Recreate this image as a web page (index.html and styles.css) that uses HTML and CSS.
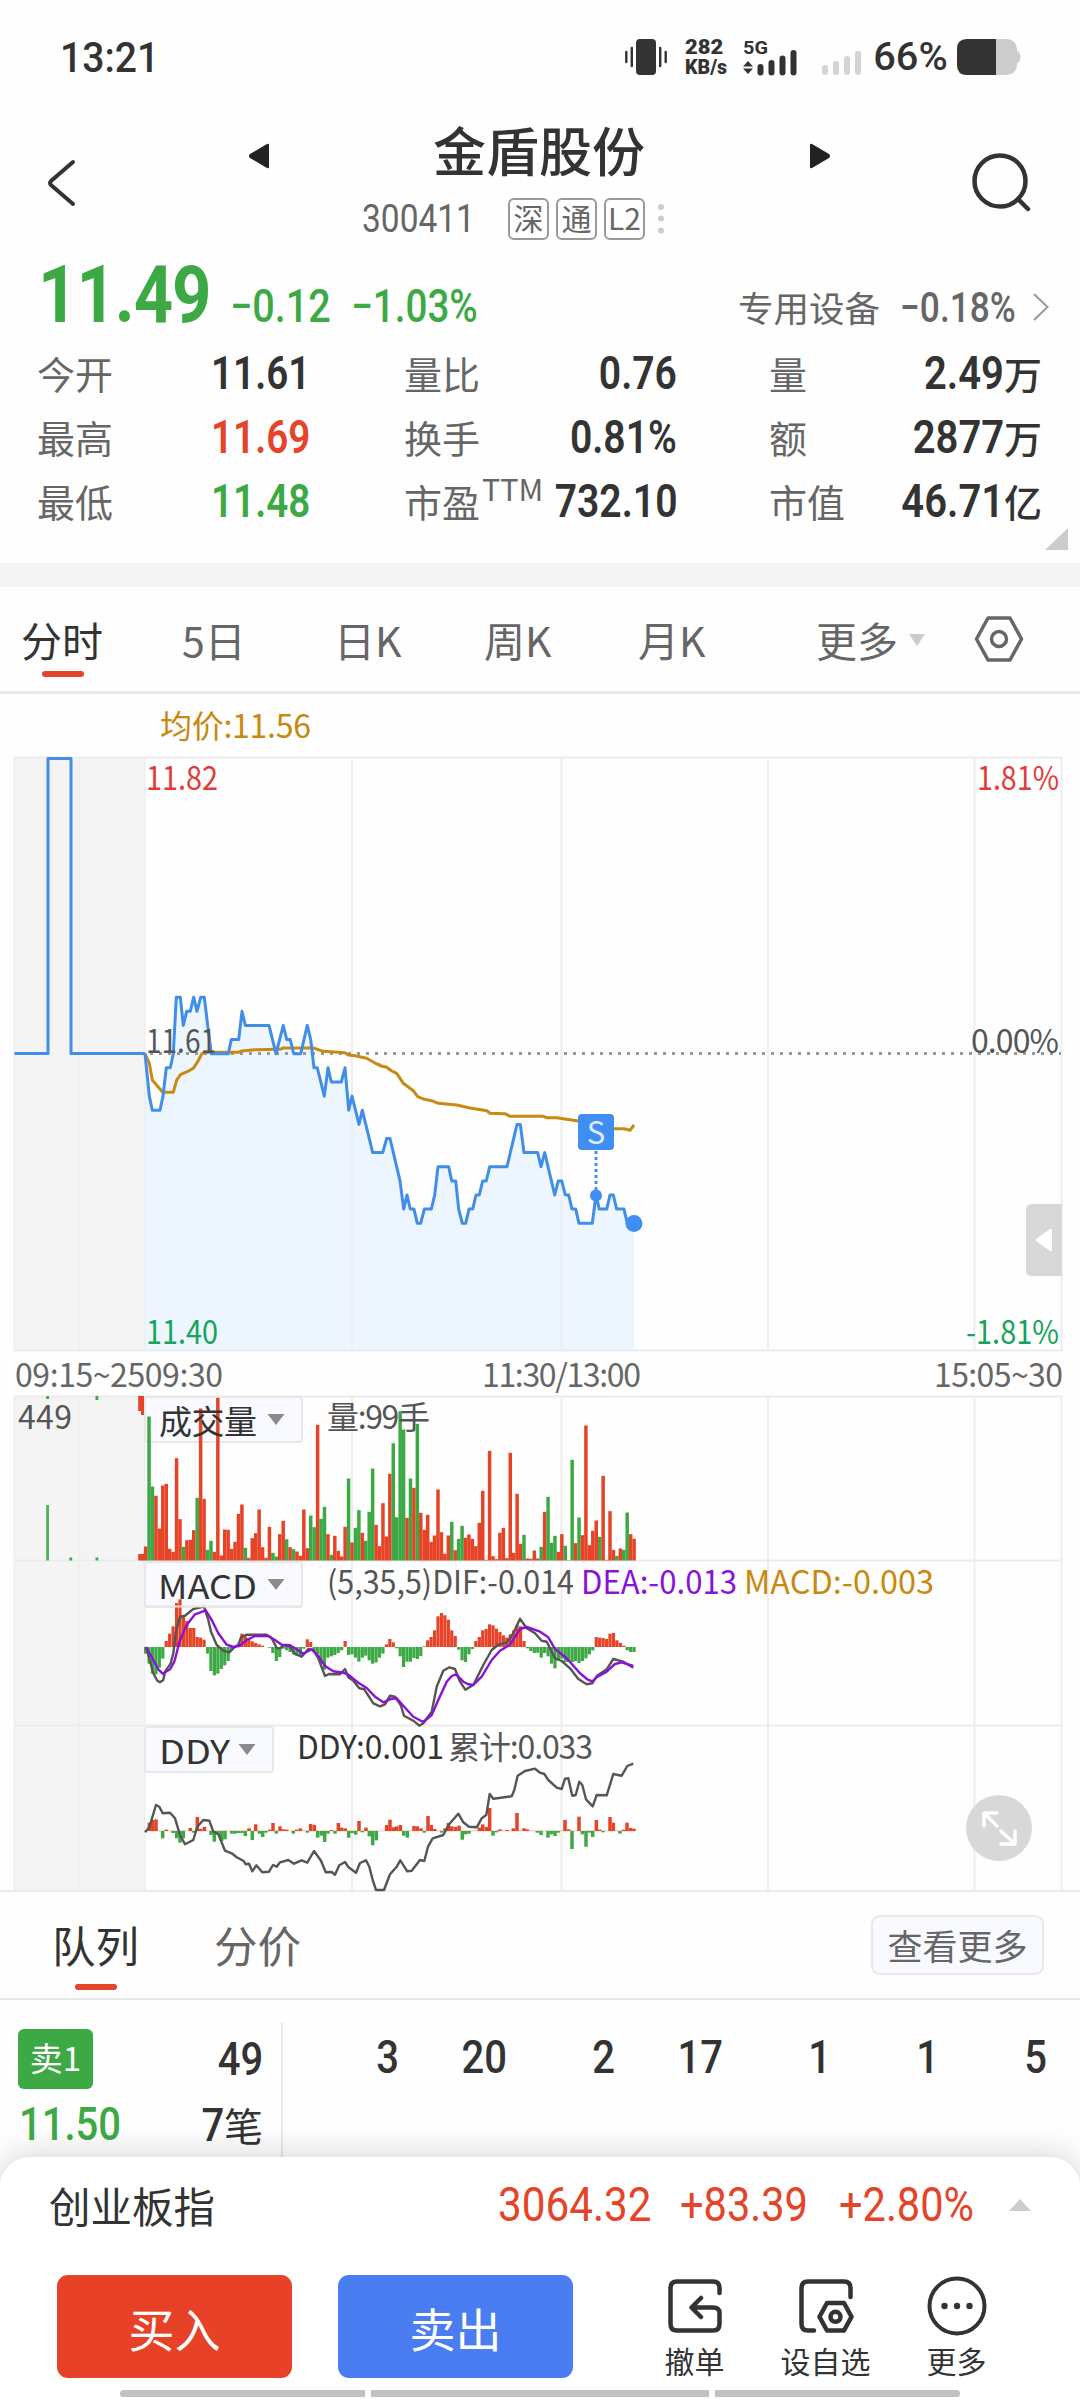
FILE: index.html
```html
<!DOCTYPE html>
<html lang="zh-CN">
<head>
<meta charset="utf-8">
<title>金盾股份 300411</title>
<link rel="stylesheet" href="styles.css">
</head>
<body>
<div class="screen">
  <div class="status">
    <span class="num clock">13:21</span>
    <svg class="vibrate" width="42" height="36" viewBox="0 0 42 36"><rect x="11" y="0" width="20" height="36" rx="4" fill="#333"/><path d="M1.3 13v10M6.8 9v18M35.200 9v18M40.700 13v10" stroke="#333" stroke-width="2.400" stroke-linecap="round"/></svg>
    <span class="net"><b>282</b><b>KB/s</b></span>
    <svg class="signal" width="56" height="36" viewBox="0 0 56 36"><text x="0" y="14.500" class="fiveg" textLength="25" lengthAdjust="spacingAndGlyphs">5G</text><path d="M0 27.500l5-5.500 5 5.500zM0 29.500h10l-5 5.500z" fill="#333"/><path d="M17.500 28v5.500M28.500 24v9.500M39.500 19.500v14M50.500 14v19.500" stroke="#333" stroke-width="6" stroke-linecap="round"/></svg>
    <svg class="signal2" width="42" height="36" viewBox="0 0 42 36"><path d="M4 29v4M15 25v8M26 20v13M37 15v18" stroke="#d4d4d4" stroke-width="6" stroke-linecap="round"/></svg>
    <span class="num percent">66%</span>
    <svg class="battery" width="64" height="36" viewBox="0 0 64 36"><rect width="60" height="36" rx="10" fill="#ccc"/><path d="M59 11c6 3 6 11 0 14z" fill="#ccc"/><path d="M39 0H10Q0 0 0 10v16q0 10 10 10h29z" fill="#333"/></svg>
  </div>

  <header class="header">
    <svg class="back" width="30" height="50" viewBox="0 0 30 50" fill="none" stroke="#333" stroke-width="4" stroke-linecap="round" stroke-linejoin="round"><path d="M27 4L5 23q-2 2 0 4l22 19"/></svg>
    <svg class="prev" width="22" height="26" viewBox="0 0 22 26"><path d="M21 2v22q0 2-2 1L2 15q-2-2 0-4L19 1q2-1 2 1z" fill="#222"/></svg>
    <div class="title">
      <h1>金盾股份</h1>
      <div class="code"><span class="num digits">300411</span><i class="tag">深</i><i class="tag">通</i><i class="tag">L2</i><svg width="8" height="32" viewBox="0 0 8 32" fill="#ccc"><circle cx="4" cy="4" r="3"/><circle cx="4" cy="15.500" r="3"/><circle cx="4" cy="27.500" r="3"/></svg></div>
    </div>
    <svg class="next" width="22" height="26" viewBox="0 0 22 26"><path d="M1 2v22q0 2 2 1l17-10q2-2 0-4L3 1Q1 0 1 2z" fill="#222"/></svg>
    <svg class="search" width="60" height="60" viewBox="0 0 60 60" fill="none" stroke="#333" stroke-width="4.500"><circle cx="28" cy="28" r="25.500"/><path d="M46 46l10 10" stroke-linecap="round"/></svg>
  </header>

  <section class="price">
    <span class="num last">11.49</span>
    <span class="num delta">−0.12</span>
    <span class="num delta pct">−1.03%</span>
    <span class="sector">专用设备</span>
    <span class="num sector-pct">−0.18%</span>
    <svg width="18" height="28" viewBox="0 0 18 28" fill="none" stroke="#999" stroke-width="2"><path d="M2 1l13.500 13L2 27"/></svg>
  </section>

  <section class="quotes">
    <dl><dt>今开</dt><dd><b class="num">11.61</b></dd></dl>
    <dl class="mid"><dt>量比</dt><dd><b class="num">0.76</b></dd></dl>
    <dl class="end"><dt>量</dt><dd><b class="num">2.49</b>万</dd></dl>
    <dl><dt>最高</dt><dd class="red"><b class="num">11.69</b></dd></dl>
    <dl class="mid"><dt>换手</dt><dd><b class="num">0.81%</b></dd></dl>
    <dl class="end"><dt>额</dt><dd><b class="num">2877</b>万</dd></dl>
    <dl><dt>最低</dt><dd class="green"><b class="num">11.48</b></dd></dl>
    <dl class="mid"><dt>市盈<sup>TTM</sup></dt><dd><b class="num">732.10</b></dd></dl>
    <dl class="end"><dt>市值</dt><dd><b class="num">46.71</b>亿</dd></dl>
  </section>
  <div class="corner"></div>

  <nav class="periods">
    <a class="on">分时</a><a>5日</a><a>日K</a><a>周K</a><a>月K</a>
    <a class="more">更多<i></i></a>
    <svg width="48" height="48" viewBox="0 0 48 48" fill="none" stroke="#666" stroke-width="3.500" stroke-linejoin="round"><path d="M13 3h22l11.500 21L35 45H13L1.500 24z"/><circle cx="24" cy="24" r="7.500"/></svg>
  </nav>

  <svg class="chart" width="1080" height="1199" viewBox="0 694 1080 1199">
    <g class="shade"><rect x="14.500" y="757.500" width="130" height="593"/><rect x="14.500" y="1396" width="130" height="495"/></g>
    <path id="area" fill="#edf5fe"/>
    <path class="grid" d="M14.500 757.500H1061.500M14.500 1350.500H1061.500M14.500 1396.500H1061.500M14.500 1560.500H1061.500M14.500 1725.500H1061.500M0 1891H1080"/>
    <path class="grid thin" d="M14.500 757V1351M79.500 757V1351M144.500 757V1351M352 757V1351M561.500 757V1351M768 757V1351M974.500 757V1351M1061.500 757V1351M14.500 1396V1891M79.500 1396V1891M144.500 1396V1891M352 1396V1891M561.500 1396V1891M768 1396V1891M974.500 1396V1891M1061.500 1396V1891"/>
    <text class="t gold" x="160" y="738" textLength="151">均价:11.56</text>
    <path d="M150 1053.500H1061" stroke="#999" stroke-width="3" stroke-dasharray="3 6"/>
    <g fill="none" stroke-width="3" stroke-linejoin="round">
      <path id="average" stroke="#c98a14"/>
      <path d="M14.500 1053.500H48V758.500H71V1053.500H145" stroke="#418ee8"/>
      <path id="price" stroke="#418ee8"/>
    </g>
    <text class="t" x="146" y="790" fill="#e03c3c" textLength="72" lengthAdjust="spacingAndGlyphs">11.82</text>
    <text class="t" x="146" y="1053" textLength="70" lengthAdjust="spacingAndGlyphs">11.61</text>
    <text class="t" x="146" y="1344" fill="#14a45c" textLength="72" lengthAdjust="spacingAndGlyphs">11.40</text>
    <text class="t" x="977" y="790" fill="#e03c3c" textLength="82" lengthAdjust="spacingAndGlyphs">1.81%</text>
    <text class="t" x="971" y="1053" textLength="88">0.00%</text>
    <text class="t" x="966" y="1344" fill="#14a45c" textLength="93" lengthAdjust="spacingAndGlyphs">-1.81%</text>
    <g fill="#3f8ef3">
      <rect x="578" y="1114" width="36" height="36" rx="4"/>
      <path d="M596 1151V1190" stroke="#3f8ef3" stroke-width="3" stroke-dasharray="3 3"/>
      <circle cx="596" cy="1195.500" r="6"/>
      <circle cx="634" cy="1223.500" r="8.500"/>
    </g>
    <text x="596" y="1143.500" class="mark">S</text>
    <path d="M1062 1204h-30q-6 0-6 6v60q0 6 6 6h30z" fill="#d8d8d8"/>
    <path d="M1052 1230v20q0 2-2 1l-14-10q-1-1 0-2l14-10q2-1 2 1z" fill="#fff"/>
    <text class="t axis" x="15" y="1387" textLength="208">09:15~2509:30</text>
    <text class="t axis" x="482" y="1387" textLength="159">11:30/13:00</text>
    <text class="t axis" x="934" y="1387" textLength="129">15:05~30</text>

    <g class="picker"><rect x="145" y="1397" width="157" height="45" rx="3"/><rect x="145" y="1562" width="157" height="45" rx="3"/><rect x="145" y="1727" width="128" height="45" rx="3"/></g>
    <g id="volume"></g>
    <g id="macd"></g>
    <g id="ddy"></g>
    <g fill="none" stroke-width="2.400" stroke-linejoin="round">
      <path id="dif" stroke="#555"/><path id="dea" stroke="#8a12d6"/><path id="total" stroke="#555"/>
    </g>
    <path d="M145.500 1606.500H302" stroke="#e6e6e8" stroke-width="2"/>
    <path d="M267.500 1414h17l-8.500 11zM267.500 1579h17l-8.500 11zM238.500 1744h17l-8.500 11z" fill="#8a8a8a"/>
    <text class="t" x="18" y="1429" textLength="54">449</text>
    <text class="t pick" x="159" y="1434" textLength="98">成交量</text>
    <text class="t" x="327" y="1429" textLength="103">量:99手</text>
    <text class="t pick" x="158" y="1598.500" textLength="99" lengthAdjust="spacingAndGlyphs">MACD</text>
    <text class="t" x="327" y="1594" textLength="247" lengthAdjust="spacingAndGlyphs">(5,35,5)DIF:-0.014</text>
    <text class="t" x="581" y="1594" fill="#8a12d6" textLength="156" lengthAdjust="spacingAndGlyphs">DEA:-0.013</text>
    <text class="t gold" x="744" y="1594" textLength="190" lengthAdjust="spacingAndGlyphs">MACD:-0.003</text>
    <text class="t pick" x="159" y="1763.500" textLength="71" lengthAdjust="spacingAndGlyphs">DDY</text>
    <text class="t pick small" x="297" y="1759" textLength="147" lengthAdjust="spacingAndGlyphs">DDY:0.001</text>
    <text class="t" x="448" y="1759" textLength="145">累计:0.033</text>
    <circle cx="999" cy="1828" r="33" fill="#d8d8d8"/>
    <path d="M997 1826l-13-13M997 1813h-13v13M1001 1831l14 13M1001 1844h14v-13" fill="none" stroke="#fff" stroke-width="3.500" stroke-linejoin="round" stroke-linecap="round"/>
  </svg>

  <nav class="book-tabs"><a class="on">队列</a><a>分价</a><button>查看更多</button></nav>

  <section class="queue">
    <div class="level">
      <span class="badge">卖1</span><b class="num">49</b>
      <b class="num ask">11.50</b><span class="count"><b class="num">7</b>笔</span>
    </div>
    <div class="orders"><b class="num">3</b><b class="num">20</b><b class="num">2</b><b class="num">17</b><b class="num">1</b><b class="num">1</b><b class="num">5</b></div>
  </section>

  <footer class="sheet">
    <div class="index">
      <span class="name">创业板指</span>
      <span class="num">3064.32</span><span class="num">+83.39</span><span class="num">+2.80%</span><i></i>
    </div>
    <div class="actions">
      <button class="buy">买入</button><button class="sell">卖出</button>
      <a class="a1"><svg width="60" height="60" viewBox="0 0 60 60" fill="none" stroke="#333" stroke-width="4.500" stroke-linecap="round" stroke-linejoin="round"><path d="M54.500 17V12q0-6.500-6.500-6.500H12q-6.500 0-6.500 6.500v36q0 6.500 6.500 6.500H48q6.500 0 6.500-6.500V37q0-5.500-6.500-5.500H27M36 22L26.500 31.500 36 41"/></svg>撤单</a>
      <a class="a2"><svg width="60" height="60" viewBox="0 0 60 60" fill="none" stroke="#333" stroke-width="4.500" stroke-linecap="round" stroke-linejoin="round"><path d="M54.500 21V12q0-6.500-6.500-6.500H12q-6.500 0-6.500 6.500v36q0 6.500 6.500 6.500h6M31 27H48L55.500 40.800 48 54.500H31L23.500 40.800z"/><circle cx="39.500" cy="40.800" r="5"/></svg>设自选</a>
      <a class="a3"><svg width="60" height="60" viewBox="0 0 60 60"><circle cx="30" cy="30" r="27.500" fill="none" stroke="#333" stroke-width="4"/><g fill="#333"><circle cx="17.500" cy="30" r="3.200"/><circle cx="30" cy="30" r="3.200"/><circle cx="42.500" cy="30" r="3.200"/></g></svg>更多</a>
    </div>
    <div class="homebar"><i></i><i></i><i></i></div>
  </footer>
</div>
<script src="chart.js"></script>
</body>
</html>
```
FILE: styles.css
```css
* { box-sizing: border-box; }
body { margin: 0; background: #fefefe; color: #333; font-family: "Noto Sans CJK SC", sans-serif; }
h1, dl, dd { margin: 0; font-weight: 400; }
i { font-style: normal; }
svg { display: block; flex: none; overflow: visible; }
button { font-family: inherit; padding: 0; }
.screen { width: 1080px; height: 2400px; overflow: hidden; display: flex; flex-direction: column; background: #fefefe; }
.num { font-family: Roboto, sans-serif; display: inline-block; transform: scaleX(.87); transform-origin: right center; white-space: nowrap; flex: none; }
.red { color: #e5432a; }
.green { color: #3da945; }

.status { height: 114px; display: flex; align-items: center; flex: none; padding-left: 60px; }
.clock { width: 565px; font-size: 42px; font-weight: 500; transform: scaleX(.93); transform-origin: left center; }
.net { width: 76px; padding-left: 18px; display: flex; flex-direction: column; font: 700 20px/20.500px Roboto, sans-serif; }
.net b { transform: scaleX(1.1); transform-origin: left center; }
.net b + b { transform: scaleX(.98); }
.fiveg { font: 700 18px Roboto, sans-serif; fill: #333; }
.signal2 { margin-left: 22px; }
.percent { width: 94px; padding-left: 10px; font-size: 39px; font-weight: 500; transform: scaleX(1.02); transform-origin: left center; }

.header { height: 135px; display: flex; align-items: flex-start; flex: none; padding-left: 46px; }
.back { margin-top: 44px; }
.prev { margin: 29px 0 0 172px; }
.title { width: 539px; padding: 2px 0 0 92px; }
.title h1 { width: 354px; text-align: center; font-size: 53px; line-height: 66px; font-weight: 500; }
.code { display: flex; align-items: center; height: 42px; margin-top: 16px; gap: 7px; }
.digits { width: 139px; font-size: 38.500px; line-height: 42px; color: #666; transform: scaleX(.87); transform-origin: left center; margin-left: 0; }
.tag { width: 41px; height: 42px; border: 2px solid #999; border-radius: 6px; font-size: 30px; line-height: 35px; text-align: center; color: #666; }
.code svg { margin-left: 5px; }
.next { margin-top: 29px; }
.search { margin: 39px 0 0 141px; }

.price { height: 93px; flex: none; display: flex; align-items: baseline; padding: 4px 0 0 38px; color: #3da945; line-height: 84px; }
.price .num { transform-origin: left; }
.last { width: 192px; font-size: 79px; font-weight: 700; letter-spacing: -1.200px; }
.delta { width: 121px; font-size: 46px; font-weight: 500; }
.price .delta { transform: scaleX(.86); }
.price .pct { width: 387px; transform: scaleX(.84); }
.sector { width: 162px; font-size: 35.500px; color: #666; }
.sector-pct { width: 132px; font-size: 42px; color: #666; font-weight: 500; }
.price .sector-pct { transform: scaleX(.84); }
.price svg { align-self: flex-start; margin-top: 40px; }

.quotes { height: 193px; flex: none; display: grid; grid-template-columns: 275px 273px 1fr; grid-template-rows: repeat(3, 64px); column-gap: 92px; padding: 0 38px 0 37px; margin-top: -1px; }
.quotes dl { display: flex; justify-content: space-between; align-items: center; white-space: nowrap; }
.quotes dt { font-size: 38px; color: #666; line-height: 60px; }
.quotes sup { font-size: 30.500px; line-height: 0; position: absolute; margin: 0 0 0 2px; padding-top: 17px; }
.quotes dd { font-size: 38px; line-height: 60px; font-weight: 500; }
.quotes dd b { font-size: 46px; font-weight: 600; line-height: 60px; }
.quotes dl:nth-child(3n+1) dd { width: 101px; }
.quotes dl:nth-child(3n+1) b { transform: scaleX(.84); transform-origin: left center; }
.quotes .mid b { transform: scaleX(.85); }
.corner { width: 23px; height: 22px; margin: -6px 0 13px 1045px; flex: none; background: #ccc; clip-path: polygon(100% 0, 100% 100%, 0 100%); }

.periods { height: 131px; flex: none; border-top: 24px solid #f4f4f4; border-bottom: 3px solid #e9e9e9; display: grid; grid-template-columns: 161px 152px 150px 154px 178px 159px 1fr; padding-left: 21px; }
.periods a { font-size: 41px; line-height: 104px; color: #666; position: relative; white-space: nowrap; }
.periods a.on { color: #333; }
.periods a.on::after, .book-tabs a.on::after { content: ""; position: absolute; left: 21px; top: 84px; width: 42px; height: 6px; border-radius: 3px; background: #e5432a; }
.more i { position: absolute; left: 93px; top: 47px; border: 8.500px solid transparent; border-top: 12px solid #ccc; border-bottom: 0; }
.periods svg { margin-top: 28px; }

.chart { flex: none; }
.shade { fill: #f4f4f4; }
.grid { stroke: #ebebeb; stroke-width: 2; fill: none; }
.grid.thin { stroke: #eee; }
.t { font: 400 32px "Noto Sans CJK SC", sans-serif; }
.t:not([fill]) { fill: #555; }
.t.gold { fill: #c9880f; }
.t.axis { fill: #666; }
.t.pick { fill: #333; font-size: 33px; }
.t.small { font-size: 32px; }
.mark { font: 31px "Noto Sans CJK SC", sans-serif; fill: #dfeaf8; text-anchor: middle; }
.picker { fill: #f8faff; stroke: #e8e8e8; stroke-width: 2; }

.book-tabs { height: 107px; flex: none; display: flex; border-bottom: 2px solid #e8e8e8; padding-left: 52px; }
.book-tabs a { width: 162px; font-size: 43.500px; line-height: 104px; color: #666; position: relative; }
.book-tabs a.on { color: #333; }
.book-tabs a.on::after { left: 23px; top: 91px; }
.book-tabs button { width: 173px; height: 60px; margin: 22px 0 0 495px; border: 2px solid #e6e8ec; border-radius: 9px; background: #f8faff; color: #666; font-size: 35px; line-height: 54px; }

.queue { height: 157px; flex: none; padding-top: 23px; display: flex; }
.queue b { font-size: 46px; font-weight: 500; line-height: 60px; }
.level { width: 283px; border-right: 2px solid #e8e8e8; padding: 6px 18px 0; display: grid; grid-template-columns: 75px 1fr; grid-template-rows: 65px 60px; justify-items: end; }
.badge { width: 75px; height: 60px; border-radius: 6px; background: #3da945; color: #fff; font-size: 33px; line-height: 56px; text-align: center; justify-self: start; }
.level .ask { color: #3da945; justify-self: start; transform-origin: left; margin-left: 1px; }
.count { font-size: 39px; line-height: 60px; }
.orders { display: grid; grid-template-columns: repeat(7, 108px); padding: 4px 0 0 8px; }
.orders b { text-align: right; }

.sheet { height: 243px; flex: none; background: #fff; border-radius: 30px 30px 0 0; box-shadow: 0 -4px 32px rgba(0,0,0,.15); position: relative; display: flex; flex-direction: column; }
.index { height: 118px; display: flex; align-items: center; padding-left: 49px; font-size: 41.500px; line-height: 96px; padding-bottom: 22px; }
.index .name { width: 449px; }
.index .num { width: 182px; font-size: 48px; color: #e5432a; transform: scaleX(.88); transform-origin: left; }
.index .num + .num { width: 159px; transform: scaleX(.865); }
.index i { margin-left: 11px; border: 11px solid transparent; border-bottom: 12px solid #ccc; border-top: 0; }
.actions { height: 115px; display: flex; padding-left: 57px; }
.actions button { width: 235px; height: 103px; border: 0; border-radius: 11px; font-size: 46px; line-height: 100px; color: #fff; margin-right: 46px; }
.buy { background: #e74227; }
.sell { background: #4a7df2; }
.actions a { width: 131px; display: flex; flex-direction: column; align-items: center; font-size: 30px; line-height: 49px; white-space: nowrap; margin-top: 1px; }
.a1 { margin-left: 10px; }
.homebar { display: flex; gap: 6px; padding-left: 120px; }
.homebar i { width: 245px; height: 7px; background: #c1c1c1; }
.homebar i:nth-child(2) { width: 338px; }
.homebar i:first-child { border-radius: 4px 0 0 4px; }
.homebar i:last-child { border-radius: 0 4px 4px 0; }
```
FILE: chart.js
```js
const RED = "#e64327", GREEN = "#3da945", STEP = 3.44, START = 145.6;
const get = id => document.getElementById(id);
const pairs = s => s.trim().split(/\s+/).map(p => p.split(",").map(Number));
const path = pts => "M" + pts.map(p => p[0].toFixed(1) + " " + p[1].toFixed(1)).join("L");
const tri = (s, ox, oy) => pairs(s).map(p => [ox + p[0] / 3, oy + p[1] / 3]);
const bar = (x, y, w, h, c) => `<rect x="${x.toFixed(2)}" y="${y.toFixed(2)}" width="${w}" height="${h.toFixed(2)}" fill="${c}"/>`;

// price: x offset in thirds of a pixel, move from the previous close in ticks of 0.01
const tick = (s, ox) => pairs(s).map(p => [ox + p[0] / 3, 1053.7 - p[1] * 14.13]);
const price = [
  ...tick("45,0 58,-3 67,-4 90,-4 99,-3 109,-1 121,-1 130,0 139,4 151,4 160,2 170,3 181,3 191,4 201,3 212,4 223,4 233,2 244,0 295,0 304,1 326,1 336,3 346,2 417,2 438,0 460,2 470,1 481,1 491,0 512,0 532,2 542,1 552,-1 562,-1 583,-3 594,-1 604,-2 634,-2 645,-1 656,-4 666,-3 687,-5 697,-4 728,-7 757,-7", 130),
  ...tick("8,-7 20,-6 30,-6 60,-9 71,-11 81,-10 91,-11 102,-11 112,-12 122,-12 133,-11 154,-11 164,-10 174,-8 206,-8 215,-9 227,-9 236,-11 247,-12 257,-12 267,-11 278,-11 288,-10 298,-10 308,-9 319,-9 329,-8 381,-8 411,-5 421,-5 432,-7 473,-7 483,-8 494,-7 524,-10 535,-9 545,-9 556,-10 566,-10 576,-11 587,-11 597,-12 637,-12 648,-10 658,-11 680,-11 690,-10 700,-10 710,-11 732,-11 742,-12 762,-12", 380)
];
get("price").setAttribute("d", path(price));
get("area").setAttribute("d", path(price) + "V1350.500H145Z");
get("average").setAttribute("d", path([
  ...tri("45,281 58,310 67,360 98,397 130,397 140,360 152,343 172,335 190,325 203,305 215,282 225,277 325,277 335,273 375,269 450,268 460,264 550,264 580,274 645,278 655,285 675,287 710,295 740,312 750,315", 130, 960),
  ...tri("0,137 20,142 35,153 50,160 70,190 100,212 113,230 133,238 155,242 175,250 230,255 270,264 320,272 330,280 375,281 390,289 490,289 500,293 530,293 600,304 700,326 732,326 750,331 762,315", 380, 1020)
]));

const volume = "R620 G230 G440 R468 R566 R437 R432 R627 R636 R355 R538 G621 R601 R600 R571 G474 R206 R477 G630 G603 R636 R174 R647 R569 R570 R627 R606 R522 R494 G624 R654 R595 R580 R509 R622 R654 R561 G639 G650 R583 R543 G598 R622 G628 R635 R648 R509 R625 G527 G562 R255 G537 G501 R583 G645 R588 R633 R650 R561 G416 R608 G564 G511 R579 G603 G516 G386 R555 R619 R490 R590 R402 G310 G532 G214 G269 R534 G416 R444 G252 R519 R570 R525 R606 R587 R449 R577 R642 R587 G546 R631 G597 G558 R594 R584 R597 R619 R549 R453 R660 R333 R649 R658 R579 R564 R655 R339 R639 R462 R612 G585 R656 R657 R632 R656 G621 R516 G471 G609 G588 R636 R583 G618 R661 G360 R610 G533 R586 R257 R616 R573 R542 G591 R408 R660 R514 R630 G648 R626 G630 G518 R583 R597".split(" ");
get("volume").innerHTML = volume.map((v, i) => {
  const h = (662 - v.slice(1)) / 3;
  return bar(START + i * STEP - 1.75, 1560.5 - h, 3.5, h, v[0] === "R" ? RED : GREEN);
}).join("") +
  bar(46.2, 1505, 2.8, 55.5, "#53b05a") + bar(69.4, 1557.5, 2.8, 3, GREEN) + bar(95.5, 1557.5, 2.8, 3, GREEN) +
  bar(46.2, 1396, 2.8, 3, GREEN) + bar(95.5, 1396, 2.8, 4, GREEN) +
  bar(138.2, 1554, 6, 6.5, RED) + bar(138.2, 1396, 3.5, 15, RED) + bar(141, 1396, 3, 19, RED);

const macd = [-20,-50,-80,-82,-62,-35,18,40,62,132,143,90,78,57,57,30,28,22,-20,-72,-85,-80,-66,-55,-42,-8,0,10,40,32,27,17,12,8,4,0,-2,-18,-42,-30,-5,-10,-15,-22,-26,-26,-5,23,15,-12,-22,-50,-68,-32,-28,-24,-18,-10,18,-24,-22,-32,-44,-32,-26,-40,-50,-46,-32,-20,8,24,14,-4,-28,-60,-44,-44,-33,-36,-27,2,20,30,50,92,102,95,82,50,33,-8,-40,-45,-22,-6,18,30,50,54,68,65,55,45,35,28,38,50,66,62,18,-4,-12,-18,-17,-32,-18,-28,-50,-64,-40,-35,-45,-45,-45,-42,-48,-42,-34,-22,-10,30,28,27,24,40,42,20,12,4,-10,-15,-15];
const signed = (x, v, zero, w) => bar(x - w / 2, v > 0 ? zero - v / 3 : zero, w, Math.abs(v) / 3, v > 0 ? RED : GREEN);
get("macd").innerHTML = macd.map((v, i) => signed(START + i * STEP, v, 1647, 3.2)).join("");
get("dif").setAttribute("d", path(tri("48,291 58,325 70,370 82,392 90,397 100,390 105,365 122,340 130,310 137,250 150,200 165,197 190,177 222,170 235,210 243,245 260,285 280,302 298,307 315,290 325,285 333,262 350,254 410,254 425,265 440,294 450,295 462,286 480,290 495,312 515,320 535,297 550,300 565,325 585,378 597,372 630,373 645,357 655,382 670,392 688,415 703,418 730,460 750,469 765,463 780,437 795,440 812,465 822,497 850,512 868,527 880,520 905,485 920,410 940,362 958,352 975,357 990,395 1006,419 1030,405 1060,345 1085,300 1105,284 1130,278 1150,250 1170,206 1190,235 1215,250 1235,272 1250,275 1275,325 1295,333 1320,355 1345,387 1370,403 1387,400 1400,378 1430,358 1450,327 1480,335 1510,353", 130, 1550)));
get("dea").setAttribute("d", path(tri("48,291 70,330 85,358 98,371 120,358 133,335 150,270 170,225 195,193 227,181 245,210 265,250 290,284 310,291 330,287 350,270 375,258 415,258 435,270 455,284 480,286 500,298 520,311 545,298 565,318 585,348 610,364 640,368 655,374 685,398 710,414 735,440 760,457 785,446 800,445 815,462 850,500 880,516 905,495 925,450 950,395 965,378 978,373 1000,395 1015,403 1030,405 1055,380 1085,330 1110,302 1140,284 1170,237 1190,231 1230,245 1255,262 1275,297 1310,325 1350,370 1372,388 1387,394 1400,382 1430,365 1455,342 1475,337 1510,348", 130, 1550)));

const ddy = pairs("58,25 68,33 78,35 98,-22 109,4 129,-6 140,-22 150,-35 160,-22 181,9 191,-5 202,42 212,6 223,12 243,-12 253,-32 264,-12 275,-30 285,-25 305,-8 315,-8 325,-6 336,-6 346,-15 357,8 367,-27 377,20 388,-8 398,-18 408,-5 419,4 429,24 439,-8 450,14 460,5 470,4 490,-8 500,4 511,8 532,-5 542,21 553,18 563,-20 574,-14 584,-33 594,-8 604,3 615,-8 625,24 635,10 646,8 656,-20 666,-6 677,-11 687,30 697,-4 708,10 718,-16 728,-43 739,-28 770,18 780,34 790,11 800,14 811,18 821,-14 832,-20 852,15 862,14 873,8 883,-5 894,45 904,18 914,6 935,-5 945,8 955,24 965,14 976,12 987,16 997,-26 1007,-10 1017,-8 1048,10 1058,20 1069,12 1079,69 1089,-14 1100,-4 1110,5 1131,3 1150,8 1161,54 1182,8 1192,5 1222,-5 1233,-12 1254,-20 1264,-10 1275,-15 1285,-5 1305,33 1316,5 1326,-54 1347,43 1357,-10 1368,-47 1378,-5 1388,-18 1399,33 1409,4 1419,-4 1440,42 1450,25 1470,-8 1481,4 1491,25 1502,9 1512,7");
get("ddy").innerHTML = bar(145, 1830.6, 490, .6, "#e99a8a") + ddy.map(([x, v]) => signed(130 + x / 3, v, 1831, 3.5)).join("");
get("total").setAttribute("d", path(tri("45,367 58,352 78,285 88,290 98,310 120,308 135,325 150,375 165,403 190,390 202,350 220,330 238,332 250,365 265,372 285,422 305,430 320,442 340,452 347,463 357,461 367,484 379,466 397,487 417,485 429,465 440,470 450,457 475,450 492,461 515,451 532,458 552,423 573,452 587,487 605,486 615,494 628,466 645,456 655,471 678,488 690,459 708,451 718,470 728,510 738,540 762,540 780,493 800,470 811,451 832,484 845,482 870,450 883,453 894,410 908,385 940,375 958,342 985,311 1000,337 1017,350 1040,352 1055,325 1069,315 1079,252 1090,266 1145,259 1153,240 1163,197 1185,183 1215,176 1230,188 1243,192 1255,210 1280,233 1295,237 1305,206 1315,205 1327,257 1337,255 1348,215 1357,225 1368,268 1388,289 1400,255 1430,256 1450,192 1475,197 1492,168 1510,161", 130, 1710)));
```
